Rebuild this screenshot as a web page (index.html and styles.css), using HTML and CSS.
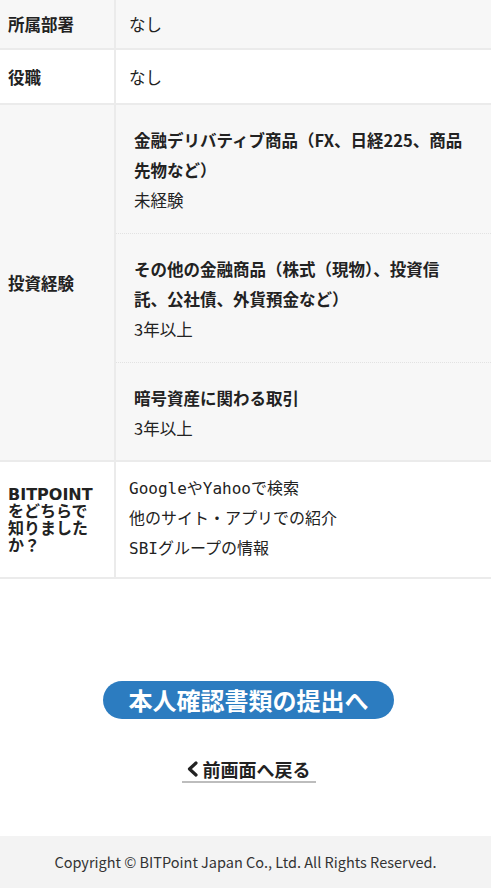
FILE: index.html
```html
<!DOCTYPE html>
<html lang="ja">
<head>
  <meta charset="UTF-8" />
  <title>入力内容の確認</title>
  <meta name="viewport" content="width=device-width, initial-scale=1" />
  <link rel="stylesheet" href="styles.css">
</head>
<body>

  <main class="confirm-main">
    <table class="confirm-table">
      <tr class="row-gray row-first">
        <th>所属部署</th>
        <td>なし</td>
      </tr>
      <tr>
        <th>役職</th>
        <td>なし</td>
      </tr>
      <tr class="row-gray">
        <th>投資経験</th>
        <td class="exp-cell">
          <div class="exp-item">
            <p class="exp-title">金融デリバティブ商品（FX、日経225、商品先物など）</p>
            <p>未経験</p>
          </div>
          <div class="exp-item">
            <p class="exp-title">その他の金融商品（株式（現物）、投資信託、公社債、外貨預金など）</p>
            <p>3年以上</p>
          </div>
          <div class="exp-item">
            <p class="exp-title">暗号資産に関わる取引</p>
            <p>3年以上</p>
          </div>
        </td>
      </tr>
      <tr class="row-source">
        <th>BITPOINTをどちらで知りましたか？</th>
        <td>
          <p>GoogleやYahooで検索</p>
          <p>他のサイト・アプリでの紹介</p>
          <p>SBIグループの情報</p>
        </td>
      </tr>
    </table>

    <div class="actions">
      <button type="button" class="btn-submit">本人確認書類の提出へ</button>
      <a class="back-link" href="#">
        <svg width="15" height="18" viewBox="0 0 15 18" aria-hidden="true">
          <path d="M11 3L4.5 9l6.5 6" fill="none" stroke="currentColor" stroke-width="3.2" stroke-linecap="round" stroke-linejoin="round"/>
        </svg>
        前画面へ戻る
      </a>
    </div>
  </main>

  <footer class="site-footer">
    Copyright © BITPoint Japan Co., Ltd. All Rights Reserved.
  </footer>

</body>
</html>
```

FILE: styles.css
```css
/* ===== BASE ===== */
html, body { margin: 0; padding: 0; }
body {
  background: #fff;
  color: #222;
  font-family: "Noto Sans CJK JP", "Noto Sans", sans-serif;
  font-size: 16px;
}
p { margin: 0; }

/* ===== TABLE ===== */
.confirm-table {
  width: 100%;
  border-collapse: collapse;
  font-size: 16.5px;
  line-height: 30px;
}
.confirm-table tr { border-bottom: 2px solid #ebebeb; }
.confirm-table th {
  width: 90px;
  padding: 12px 16px 11px 8px;
  text-align: left;
  vertical-align: middle;
  font-weight: 700;
  border-right: 2px solid #ebebeb;
}
.confirm-table td {
  padding: 12px 13px 11px;
  vertical-align: middle;
}
.row-gray { background: #f7f7f7; }
.row-first th, .row-first td { padding-top: 9px; padding-bottom: 9px; }

.exp-cell { padding: 0 !important; }
.exp-item { padding: 20px 28px 18px 18px; }
.exp-item + .exp-item { border-top: 1px dotted #e2e2e2; }
.exp-item:last-child { padding-bottom: 17px; }
.exp-title { font-weight: 700; }

.row-source th {
  font-family: "DejaVu Sans", "Noto Sans CJK JP", sans-serif;
  font-size: 16px;
  line-height: 17px;
}
.row-source td {
  padding-top: 12px;
  padding-bottom: 13px;
  font-family: "DejaVu Sans Mono", "Noto Sans CJK JP", monospace;
  font-size: 16px;
}

/* ===== ACTIONS ===== */
.actions {
  display: flex;
  flex-direction: column;
  align-items: center;
  padding: 102px 0 53px 6px;
}
.btn-submit {
  width: 291px;
  height: 38px;
  border: none;
  border-radius: 999px;
  background: #2c7cc0;
  color: #fff;
  font-family: "Noto Sans CJK JP", sans-serif;
  font-size: 24px;
  font-weight: 700;
  line-height: 38px;
  padding: 0;
  cursor: pointer;
}
.back-link {
  margin-top: 39px;
  display: flex;
  align-items: center;
  gap: 3px;
  padding: 0 5px 1px 3px;
  color: #222;
  font-size: 18px;
  font-weight: 700;
  line-height: 22px;
  text-decoration: none;
  border-bottom: 2px solid #bdbdbd;
}

/* ===== FOOTER ===== */
.site-footer {
  background: #f3f3f3;
  color: #333;
  text-align: center;
  font-size: 14.5px;
  line-height: 52px;
  height: 52px;
}
```
